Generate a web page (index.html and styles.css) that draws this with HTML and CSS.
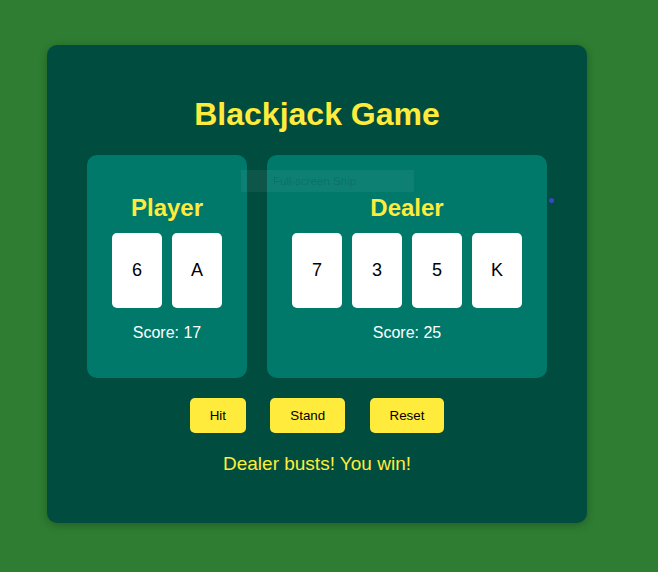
FILE: index.html
```html
<!DOCTYPE html>
<html lang="en">
<head>
<meta charset="utf-8">
<title>Blackjack Game</title>
<link rel="stylesheet" href="styles.css">
</head>
<body>
<div class="game">
  <h1 class="title">Blackjack Game</h1>
  <div class="hands">
    <div class="hand">
      <h2 class="hand-title">Player</h2>
      <div class="cards">
        <div class="card">6</div>
        <div class="card">A</div>
      </div>
      <p class="score">Score: 17</p>
    </div>
    <div class="hand">
      <h2 class="hand-title">Dealer</h2>
      <div class="cards">
        <div class="card">7</div>
        <div class="card">3</div>
        <div class="card">5</div>
        <div class="card">K</div>
      </div>
      <p class="score">Score: 25</p>
    </div>
  </div>
  <div class="controls">
    <button class="btn">Hit</button>
    <button class="btn">Stand</button>
    <button class="btn">Reset</button>
  </div>
  <p class="message">Dealer busts! You win!</p>
  <div class="snip-tip">Full-screen Snip</div>
  <div class="cursor-dot"></div>
</div>
</body>
</html>
```
FILE: styles.css
```css
html, body {
  margin: 0;
  padding: 0;
}
body {
  background: #2e7d32;
  font-family: "Liberation Sans", Arial, sans-serif;
  padding: 45px 0 0 47px;
  min-height: 572px;
  box-sizing: border-box;
}
.game {
  position: relative;
  width: 540px;
  box-sizing: border-box;
  background: #004d40;
  border-radius: 10px;
  padding: 30px 0;
  text-align: center;
  box-shadow: 0 2px 8px rgba(0, 0, 0, 0.25);
}
.title {
  margin: 21.44px 0;
  font-size: 32px;
  font-weight: bold;
  color: #ffeb3b;
  line-height: normal;
}
.hands {
  display: flex;
  justify-content: center;
  gap: 20px;
}
.hand {
  background: #00796b;
  border-radius: 10px;
  padding: 20px;
}
.hand-title {
  margin: 19px 0 11.4px;
  font-size: 24px;
  font-weight: bold;
  color: #ffeb3b;
}
.cards {
  display: flex;
  justify-content: center;
  gap: 10px;
  padding: 0 5px;
}
.card {
  width: 50px;
  height: 75px;
  background: #ffffff;
  border-radius: 5px;
  display: flex;
  align-items: center;
  justify-content: center;
  font-size: 18px;
  color: #000;
}
.score {
  margin: 16px 0;
  font-size: 16px;
  color: #ffffff;
}
.controls {
  margin-top: 20px;
  display: flex;
  justify-content: center;
  gap: 24.4px;
}
.btn {
  background: #ffeb3b;
  color: #000;
  border: none;
  border-radius: 5px;
  padding: 10px 20px;
  font-family: "Liberation Sans", Arial, sans-serif;
  font-size: 13.33px;
  line-height: 15px;
}
.message {
  margin: 20px 0 18px;
  font-size: 19px;
  color: #ffeb3b;
}
.snip-tip {
  position: absolute;
  left: 194px;
  top: 125px;
  width: 173px;
  height: 22px;
  box-sizing: border-box;
  padding-left: 32px;
  background: rgba(255, 255, 255, 0.055);
  color: rgba(0, 0, 0, 0.15);
  font-family: "Liberation Sans", Arial, sans-serif;
  font-size: 11.5px;
  line-height: 22px;
  text-align: left;
}
.cursor-dot {
  position: absolute;
  left: 502px;
  top: 153px;
  width: 5px;
  height: 5px;
  border-radius: 50%;
  background: #3a45c8;
}
```
